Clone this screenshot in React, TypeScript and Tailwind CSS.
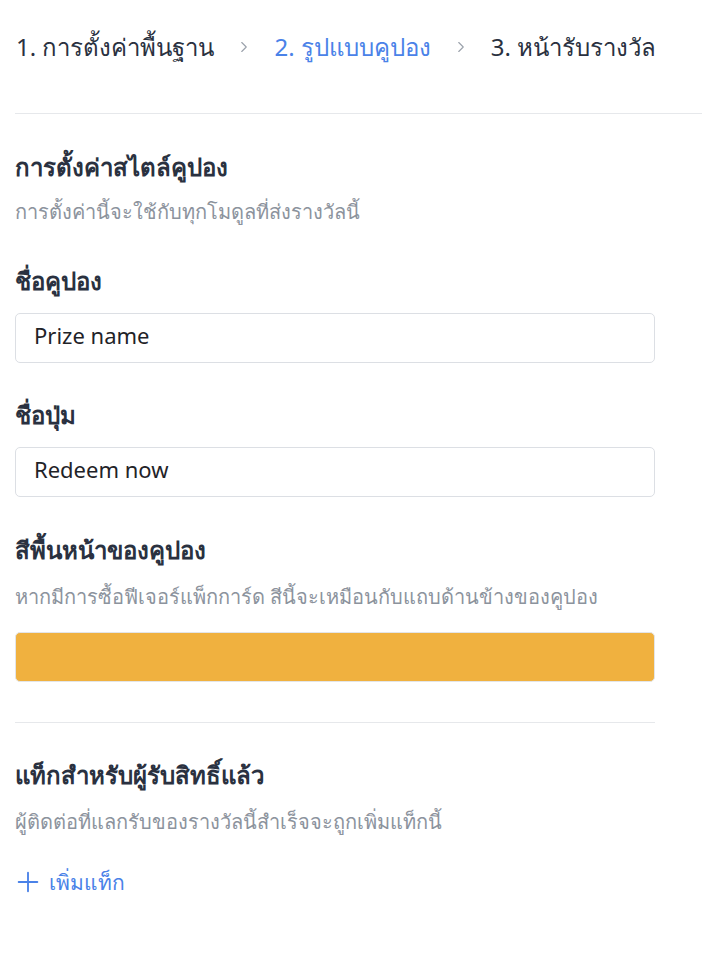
import { ChevronRight, Plus } from "lucide-react";

const title = "text-[24px] leading-[32px] font-semibold text-[#2a3140]";
const hint = "text-[20px] leading-[28px] text-[#8c939d]";

function Field({ label, value, top }: { label: string; value: string; top: string }) {
	return (
		<div className={top}>
			<h3 className={title}>{label}</h3>
			<div className="mt-[16px] h-[50px] w-[640px] rounded-[5px] border border-[#dcdfe4] bg-white px-[18px] pb-[5px] flex items-center text-[22px] text-[#1f2328]">
				{value}
			</div>
		</div>
	);
}

export default function App() {
	return (
		<div
			className="min-h-screen bg-white pl-[15px]"
			style={{ fontFamily: '"Noto Sans", sans-serif' }}
		>
			<nav className="h-[114px] flex items-center pl-[1px] pb-[20px] text-[24px] border-b border-[#e6e8eb]">
				<span className="text-[#2a3140]">1. การตั้งค่าพื้นฐาน</span>
				<ChevronRight className="mx-[21px] h-[18px] w-[18px] text-[#9aa1ab]" strokeWidth={1.5} />
				<span className="text-[#4a82e8]">2. รูปแบบคูปอง</span>
				<ChevronRight className="mx-[21px] h-[18px] w-[18px] text-[#9aa1ab]" strokeWidth={1.5} />
				<span className="text-[#2a3140]">3. หน้ารับรางวัล</span>
			</nav>

			<section className="pt-[37px] w-[640px]">
				<h2 className={title}>การตั้งค่าสไตล์คูปอง</h2>
				<p className={`mt-[15px] ${hint}`}>การตั้งค่านี้จะใช้กับทุกโมดูลที่ส่งรางวัลนี้</p>

				<Field label="ชื่อคูปอง" value="Prize name" top="mt-[39px]" />
				<Field label="ชื่อปุ่ม" value="Redeem now" top="mt-[36px]" />

				<div className="mt-[37px]">
					<h3 className={title}>สีพื้นหน้าของคูปอง</h3>
					<p className={`mt-[17px] ${hint}`}>
						หากมีการซื้อฟีเจอร์แพ็กการ์ด สีนี้จะเหมือนกับแถบด้านข้างของคูปอง
					</p>
					<div className="mt-[21px] h-[50px] w-[640px] rounded-[5px] border border-[#e3e5e8] bg-[#f0b13f]" />
				</div>

				<div className="mt-[40px] border-t border-[#e6e8eb]" />

				<div className="mt-[36px]">
					<h3 className={title}>แท็กสำหรับผู้รับสิทธิ์แล้ว</h3>
					<p className={`mt-[17px] ${hint}`}>
						ผู้ติดต่อที่แลกรับของรางวัลนี้สำเร็จจะถูกเพิ่มแท็กนี้
					</p>
					<button className="mt-[30px] flex items-center gap-[5px] text-[21px] leading-[30px] text-[#4a82e8]">
						<Plus className="h-[32px] w-[32px] -ml-[3px]" strokeWidth={1.4} />
						เพิ่มแท็ก
					</button>
				</div>
			</section>
		</div>
	);
}
